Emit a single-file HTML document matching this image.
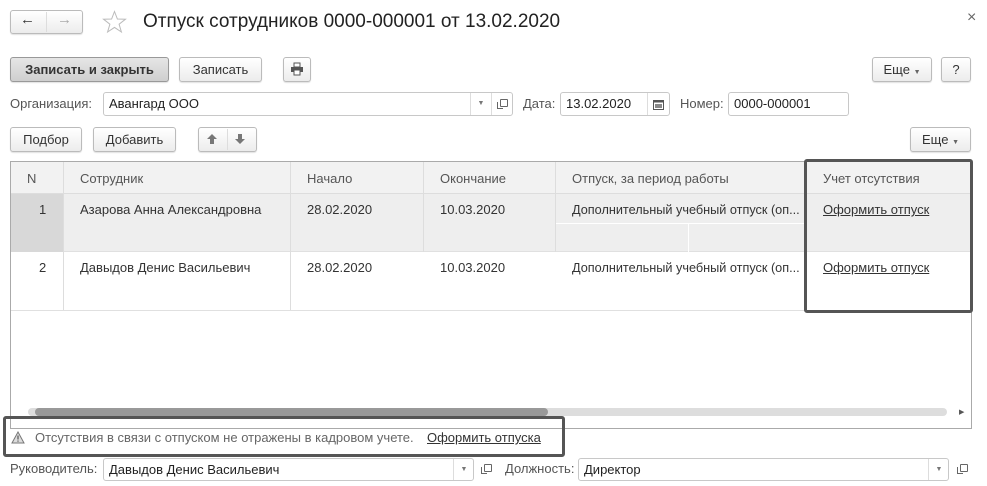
<!DOCTYPE html>
<html><head><meta charset="utf-8">
<style>
*{box-sizing:border-box;margin:0;padding:0}
body{width:987px;height:486px;background:#fff;font-family:"Liberation Sans",Arial,sans-serif;font-size:13px;color:#333;position:relative;overflow:hidden}
.a{position:absolute}
.btn{position:absolute;border:1px solid #bbb;border-radius:3px;background:linear-gradient(#fff,#ececec);box-shadow:0 1px 1px rgba(0,0,0,.12);text-align:center;line-height:22px;color:#333;font-size:13px}
.inp{position:absolute;border:1px solid #c8c8c8;border-radius:3px;background:#fff;line-height:22px;padding-left:5px;color:#222}
.lbl{position:absolute;color:#555;line-height:24px}
.dd{position:absolute;top:0;bottom:0;border-left:1px solid #ddd;width:21px;text-align:center;color:#777;font-size:7px}
.copy{position:absolute;width:8px;height:8px;border:1px solid #666;border-radius:1px}
.copy:before{content:"";position:absolute;left:-4px;top:2px;width:5px;height:6px;border-left:1px solid #666;border-bottom:1px solid #666}
.t{position:absolute;color:#333;line-height:16px;white-space:nowrap}
u{text-decoration:underline;color:#333}
</style></head><body>
<div class="btn" style="left:10px;top:10px;width:73px;height:24px"></div>
<div class="a" style="left:46px;top:12px;width:1px;height:20px;background:#ddd"></div>
<div class="a" style="left:20px;top:11px;font-size:15px;color:#333;font-weight:bold">&#8592;</div>
<div class="a" style="left:57px;top:11px;font-size:15px;color:#aaa;font-weight:bold">&#8594;</div>
<svg class="a" style="left:102px;top:10px" width="25" height="24" viewBox="0 0 25 24"><polygon points="12.5,1.5 15.4,9 23.5,9.2 17.1,14.2 19.4,22 12.5,17.4 5.6,22 7.9,14.2 1.5,9.2 9.6,9" fill="none" stroke="#bbb" stroke-width="1"/></svg>
<div class="a" style="left:143px;top:11px;font-size:19px;color:#222">Отпуск сотрудников 0000-000001 от 13.02.2020</div>
<div class="a" style="left:967px;top:9px;font-size:16px;color:#666">×</div>
<div class="btn" style="left:10px;top:57px;width:159px;height:25px;background:linear-gradient(#e6e6e6,#cfcfcf);border-color:#999;font-weight:bold;line-height:23px">Записать и закрыть</div>
<div class="btn" style="left:179px;top:57px;width:83px;height:25px;line-height:23px">Записать</div>
<div class="btn" style="left:283px;top:57px;width:28px;height:25px"></div>
<svg class="a" style="left:290px;top:62px" width="14" height="14" viewBox="0 0 14 14"><rect x="4" y="1" width="6" height="4" fill="#fff" stroke="#555"/><rect x="1" y="5" width="12" height="5" fill="#555"/><rect x="4" y="8" width="6" height="5" fill="#fff" stroke="#555"/></svg>
<div class="btn" style="left:872px;top:57px;width:60px;height:25px;line-height:23px">Еще <span style="font-size:7px;color:#666">▼</span></div>
<div class="btn" style="left:941px;top:57px;width:30px;height:25px;line-height:23px">?</div>
<div class="lbl" style="left:10px;top:92px">Организация:</div>
<div class="inp" style="left:103px;top:92px;width:410px;height:24px">Авангард ООО
<div class="dd" style="left:366px">▼</div><div class="dd" style="left:387px"></div></div>
<div class="copy" style="left:500px;top:99px"></div>
<div class="lbl" style="left:523px;top:92px">Дата:</div>
<div class="inp" style="left:560px;top:92px;width:110px;height:24px">13.02.2020
<div class="dd" style="left:86px"></div></div>
<svg class="a" style="left:653px;top:99px" width="11" height="11" viewBox="0 0 11 11"><rect x="0.5" y="1.5" width="10" height="9" fill="none" stroke="#555"/><rect x="0.5" y="1.5" width="10" height="2" fill="#555"/><rect x="2" y="5" width="7" height="4" fill="#888"/></svg>
<div class="lbl" style="left:680px;top:92px">Номер:</div>
<div class="inp" style="left:728px;top:92px;width:121px;height:24px">0000-000001</div>
<div class="btn" style="left:10px;top:127px;width:72px;height:25px;line-height:23px">Подбор</div>
<div class="btn" style="left:93px;top:127px;width:83px;height:25px;line-height:23px">Добавить</div>
<div class="btn" style="left:198px;top:127px;width:59px;height:25px"></div>
<div class="a" style="left:227px;top:129px;width:1px;height:21px;background:#ddd"></div>
<svg class="a" style="left:206px;top:133px" width="12" height="12" viewBox="0 0 12 12"><path d="M6 1 L11 6 H8 V11 H4 V6 H1 Z" fill="#777"/></svg>
<svg class="a" style="left:234px;top:133px" width="12" height="12" viewBox="0 0 12 12"><path d="M6 11 L11 6 H8 V1 H4 V6 H1 Z" fill="#777"/></svg>
<div class="btn" style="left:910px;top:127px;width:61px;height:25px;line-height:23px">Еще <span style="font-size:7px;color:#666">▼</span></div>
<div class="a" style="left:10px;top:161px;width:962px;height:268px;border:1px solid #aaa;background:#fff;overflow:hidden">
 <div class="a" style="left:0;top:0;width:960px;height:32px;background:#f2f2f2;border-bottom:1px solid #ddd"></div>
 <div class="a" style="left:0;top:32px;width:960px;height:58px;background:#eeeeee;border-bottom:1px solid #e0e0e0"></div>
 <div class="a" style="left:0;top:32px;width:52px;height:58px;background:#d8d8d8"></div>
 <div class="a" style="left:0;top:148px;width:960px;height:1px;background:#e0e0e0"></div>
 <div class="a" style="left:545px;top:61px;width:250px;height:1px;background:#fff"></div>
 <div class="a" style="left:677px;top:61px;width:1px;height:29px;background:#fff"></div>
 <div class="a" style="left:52px;top:0;width:1px;height:148px;background:#ddd"></div>
 <div class="a" style="left:279px;top:0;width:1px;height:148px;background:#ddd"></div>
 <div class="a" style="left:412px;top:0;width:1px;height:90px;background:#ddd"></div>
 <div class="a" style="left:544px;top:0;width:1px;height:90px;background:#ddd"></div>
 <div class="a" style="left:795px;top:0;width:1px;height:148px;background:#ddd"></div>
 <div class="t" style="left:16px;top:9px;color:#555">N</div>
 <div class="t" style="left:69px;top:9px;color:#555">Сотрудник</div>
 <div class="t" style="left:296px;top:9px;color:#555">Начало</div>
 <div class="t" style="left:429px;top:9px;color:#555">Окончание</div>
 <div class="t" style="left:561px;top:9px;color:#555">Отпуск, за период работы</div>
 <div class="t" style="left:812px;top:9px;color:#555">Учет отсутствия</div>
 <div class="t" style="left:28px;top:40px">1</div>
 <div class="t" style="left:69px;top:40px">Азарова Анна Александровна</div>
 <div class="t" style="left:296px;top:40px">28.02.2020</div>
 <div class="t" style="left:429px;top:40px">10.03.2020</div>
 <div class="t" style="left:561px;top:40px;font-size:12.7px">Дополнительный учебный отпуск (оп...</div>
 <div class="t" style="left:812px;top:40px"><u>Оформить отпуск</u></div>
 <div class="t" style="left:28px;top:98px">2</div>
 <div class="t" style="left:69px;top:98px">Давыдов Денис Васильевич</div>
 <div class="t" style="left:296px;top:98px">28.02.2020</div>
 <div class="t" style="left:429px;top:98px">10.03.2020</div>
 <div class="t" style="left:561px;top:98px;font-size:12.7px">Дополнительный учебный отпуск (оп...</div>
 <div class="t" style="left:812px;top:98px"><u>Оформить отпуск</u></div>
 <div class="a" style="left:17px;top:246px;width:919px;height:8px;background:#ddd;border-radius:4px"></div>
 <div class="a" style="left:24px;top:246px;width:513px;height:8px;background:#999;border-radius:4px"></div>
 <div class="a" style="left:948px;top:246px;font-size:7px;color:#555">▶</div>
</div>
<div class="a" style="left:804px;top:159px;width:169px;height:154px;border:3px solid #555;border-radius:3px"></div>
<div class="a" style="left:3px;top:416px;width:562px;height:41px;border:3px solid #555;border-radius:3px"></div>
<svg class="a" style="left:11px;top:431px" width="14" height="13" viewBox="0 0 14 13"><path d="M7 1 L13 12 H1 Z" fill="#ddd" stroke="#777"/><rect x="6.4" y="4.5" width="1.2" height="4" fill="#555"/><rect x="6.4" y="9.5" width="1.2" height="1.2" fill="#555"/></svg>
<div class="a" style="left:35px;top:430px;color:#666;font-size:13px;white-space:nowrap">Отсутствия в связи с отпуском не отражены в кадровом учете.</div>
<div class="a" style="left:427px;top:430px;font-size:13px;white-space:nowrap"><u>Оформить отпуска</u></div>
<div class="lbl" style="left:10px;top:457px">Руководитель:</div>
<div class="inp" style="left:103px;top:458px;width:371px;height:23px;line-height:21px">Давыдов Денис Васильевич
<div class="dd" style="left:349px">▼</div></div>
<div class="copy" style="left:484px;top:464px"></div>
<div class="lbl" style="left:505px;top:457px">Должность:</div>
<div class="inp" style="left:578px;top:458px;width:371px;height:23px;line-height:21px">Директор
<div class="dd" style="left:349px">▼</div></div>
<div class="copy" style="left:960px;top:464px"></div>
</body></html>
